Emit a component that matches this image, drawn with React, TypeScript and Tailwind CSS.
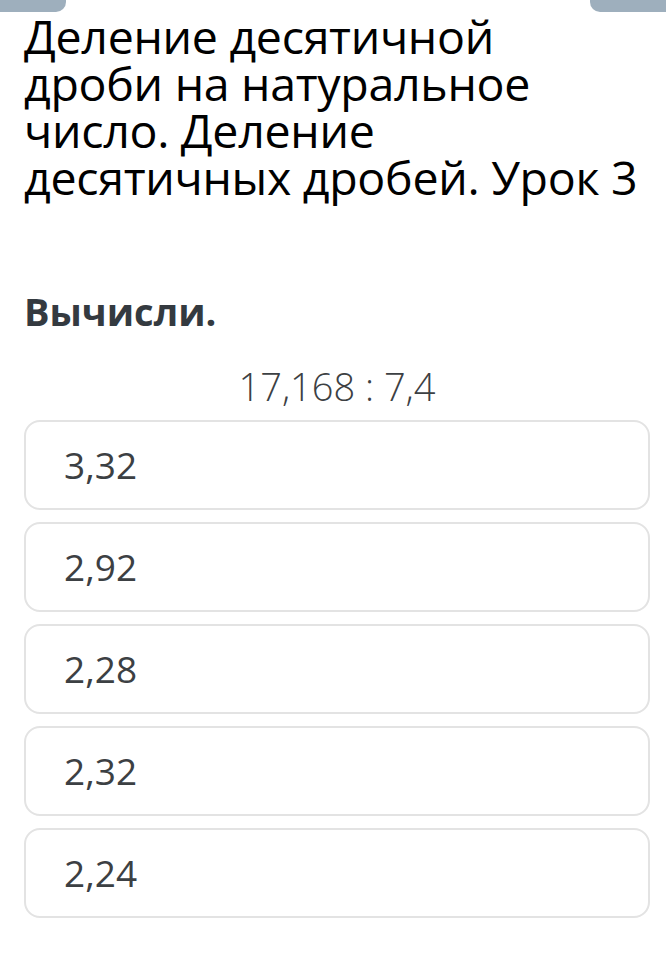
export default function App() {
  const options = ["3,32", "2,92", "2,28", "2,32", "2,24"];

  return (
    <div
      className="relative min-h-screen w-full bg-white"
      style={{ fontFamily: '"Open Sans", "Noto Sans", sans-serif' }}
    >
      {/* Top tabs */}
      <div className="absolute left-0 top-0 h-[12px] w-[66px] rounded-br-[10px] bg-[#9eafbd]" />
      <div className="absolute right-0 top-0 h-[12px] w-[76px] rounded-bl-[10px] bg-[#9eafbd]" />

      <div className="pl-[24px] pr-[16px] pt-[13px]">
        <h1 className="w-[616px] text-[46.5px] font-normal leading-[47px] tracking-[-0.3px] text-black">
          Деление десятичной дроби на натуральное число. Деление десятичных дробей. Урок 3
        </h1>

        <div className="mt-[90px] text-[38px] font-bold leading-[40px] text-[#343a40]">
          Вычисли.
        </div>

        <div className="mt-[33px] text-center text-[38px] font-light leading-[44px] text-[#3c4043]">
          17,168 : 7,4
        </div>

        <div className="mt-[12px] flex flex-col gap-[12px]">
          {options.map((o) => (
            <div
              key={o}
              className="flex h-[90px] items-center rounded-[16px] border-2 border-[#e3e3e3] px-[38px] text-[37px] text-[#3c4043]"
            >
              {o}
            </div>
          ))}
        </div>
      </div>
    </div>
  );
}
